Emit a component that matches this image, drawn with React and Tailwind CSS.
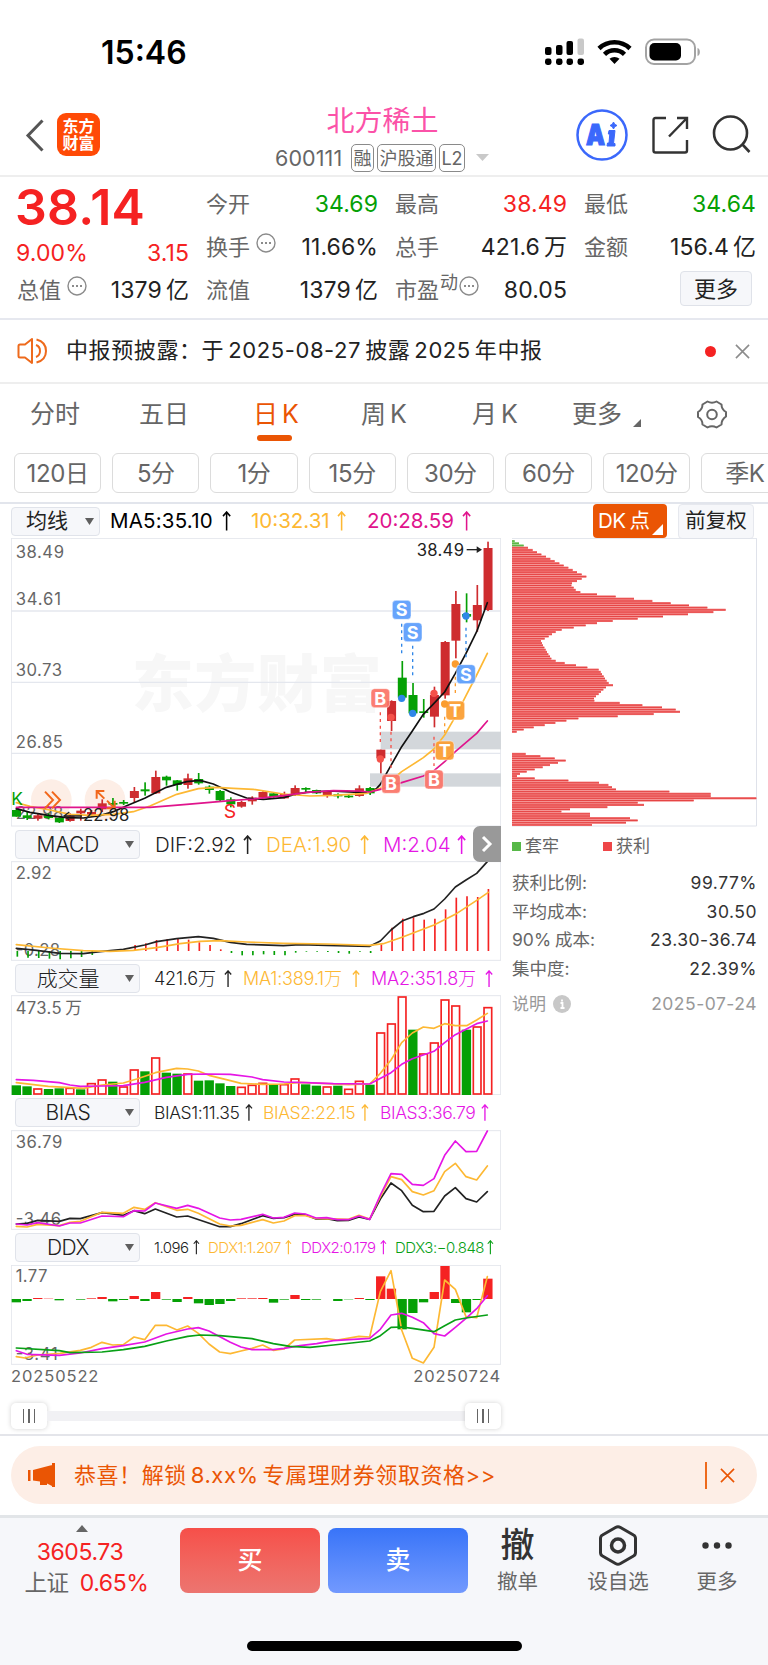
import React from 'react';
import clsx from 'clsx';

const RED = '#ce2c2f';
const GREEN = '#05a005';
const STEP = 32.15;

// [up, body top, body bottom, wick top, wick bottom]
const candles = [
  [0, 840, 860, 836, 860], [0, 856, 864, 846, 870], [1, 856, 866, 850, 872], [0, 856, 864, 850, 868],
  [0, 864, 877, 862, 879], [1, 857, 873, 850, 875], [1, 842, 850, 836, 872], [1, 846, 854, 840, 860],
  [1, 820, 838, 808, 846], [0, 819, 824, 804, 836], [0, 816, 821, 810, 825], [1, 783, 804, 771, 817],
  [0, 778, 784, 757, 797], [1, 741, 790, 722, 792], [0, 740, 751, 737, 767], [0, 751, 765, 750, 782],
  [1, 745, 765, 731, 776], [0, 747, 760, 729, 764], [0, 770, 780, 766, 791], [0, 783, 811, 780, 815],
  [0, 808, 823, 802, 832], [1, 816, 830, 812, 833], [1, 803, 814, 799, 824], [1, 786, 803, 784, 805],
  [0, 790, 801, 788, 803], [1, 792, 805, 785, 806], [1, 774, 794, 766, 798], [0, 774, 779, 772, 787],
  [0, 780, 790, 779, 792], [1, 786, 798, 783, 803], [0, 793, 799, 790, 805], [0, 797, 802, 793, 804],
  [1, 775, 798, 766, 800], [0, 774, 790, 771, 795], [1, 659, 685, 659, 730], [1, 513, 573, 511, 603],
  [0, 443, 503, 393, 506], [0, 495, 550, 459, 553], [0, 544, 549, 507, 563], [1, 495, 560, 470, 592],
  [1, 336, 496, 333, 506], [1, 222, 332, 183, 385], [0, 252, 260, 190, 277], [1, 225, 271, 165, 305],
  [1, 54, 240, 35, 243],
];

const macdBars = [
  395, 398, 399, 401, 403, 400, 396, 390, 378, 378, 378, 360, 355, 345, 342, 342, 344, 352, 360, 373,
  384, 391, 391, 388, 390, 391, 383, 380, 380, 381, 384, 386, 380, 384, 358, 308, 281, 277, 284, 281,
  253, 218, 214, 216, 192,
];

// negative value = down day
const volumes = [
  -376, -379, 386, -387, -385, 384, -388, 370, 359, -365, 380, 329, -334, 293, -338, -341, 341, -362,
  -361, -370, -378, 381, 375, 369, -373, 373, 356, -373, -377, 380, -377, 387, 363, -374, 218, 191, 110,
  -209, 281, 248, 119, 137, -209, 200, 142,
];

const ddxBars = [
  217, 213, 204, 206, 211, 207, 209, 205, 201, 214, 210, 198, 213, 186, 209, 216, 201, 220, 225, 222,
  213, 205, 205, 204, 218, 209, 195, 210, 209, 207, 213, 208, 204, 210, 139, 176, 298, 249, 217, 186,
  108, 219, 247, 210, 146,
];

const chips = [
  8, 21, 35, 48, 62, 75, 88, 102, 115, 128, 142, 155, 169, 182, 195, 209, 223, 209, 195, 180, 178, 185,
  191, 205, 255, 311, 366, 421, 476, 531, 586, 641, 604, 528, 453, 377, 302, 255, 221, 185, 149, 131,
  120, 110, 98, 87, 90, 93, 97, 101, 105, 109, 114, 118, 131, 158, 192, 226, 260, 266, 270, 275, 279,
  284, 290, 303, 282, 274, 267, 260, 252, 246, 247, 323, 391, 450, 491, 504, 425, 317, 199, 163, 130,
  98, 65, 35, 14, 0, 0, 0, 0, 0, 0, 0, 0, 0, 41, 85, 128, 161, 138, 114, 92, 68, 44, 24, 15, 68, 169,
  261, 289, 300, 312, 472, 596, 596, 733, 545, 377, 396, 286, 174, 148, 234, 234, 354, 377, 342, 240,
];

// x, y of the badge, y of the dot, dotted line from/to
const signals = [
  { t: 'B', x: 1141, y: 504, dot: 687, from: 547, to: 645 },
  { t: 'S', x: 1205, y: 239, dot: 505, from: 281, to: 380 },
  { t: 'S', x: 1238, y: 306, dot: 550, from: 347, to: 445 },
  { t: 'B', x: 1173, y: 761, dot: 562, from: 605, to: 720 },
  { t: 'B', x: 1302, y: 748, dot: 490, from: 620, to: 708 },
  { t: 'T', x: 1366, y: 541, dot: 402, from: 440, to: 500 },
  { t: 'T', x: 1334, y: 661, dot: 522, from: 560, to: 620 },
  { t: 'S', x: 1398, y: 432, dot: 258, from: 293, to: 390 },
];

const signalColor = {
  B: { box: '#fb7467', line: '#f5524a' },
  S: { box: '#5b9dfc', line: '#2f86e8' },
  T: { box: '#fb9d30', line: '#fb9d30' },
};

const Line = ({ points, color, w = 5 }) => (
  <polyline points={points} fill="none" stroke={color} strokeWidth={w} strokeLinejoin="round" strokeLinecap="round" />
);

const Label = ({ x, y, len, children, color = '#666', size = 50 }) => (
  <text x={x} y={y} fontSize={size} textLength={len} fill={color}>
    {children}
  </text>
);

// small breathing space between digits and Chinese characters
const Gap = () => <i className="inline-block w-[4px]" />;

const Dots = ({ className }) => (
  <svg className={className} width="20" height="20" viewBox="0 0 20 20" fill="none" stroke="#8b8b8b">
    <circle cx="10" cy="10" r="9" strokeWidth="1.4" />
    <path d="M5 10h2M9 10h2M13 10h2" strokeWidth="2" />
  </svg>
);

const StatusBar = () => (
  <div className="flex h-[100px] items-start pt-[38px] pl-[101px]">
    <div className="w-[91px] text-[32px] leading-[29px] font-semibold tracking-[0px] text-black">15:46</div>
    <svg className="ml-[351px]" width="160" height="30" viewBox="543 38 160 30">
      <g fill="#000">
        <rect x="545" y="47" width="6.5" height="8" rx="2" />
        <rect x="556" y="45" width="6.5" height="10" rx="2" />
        <rect x="566.5" y="41" width="6.5" height="14" rx="2" />
        <rect x="577.5" y="38.5" width="6.5" height="16.5" rx="2" fill="#c9c9c9" />
        <rect x="545" y="58.5" width="6.5" height="6.5" rx="2.4" />
        <rect x="556" y="58.5" width="6.5" height="6.5" rx="2.4" />
        <rect x="566.5" y="58.5" width="6.5" height="6.5" rx="2.4" />
        <rect x="577.5" y="58.5" width="6.5" height="6.5" rx="2.4" />
        <path d="M614.5 64l-5-5.200a7.600 7.600 0 0 1 10 0z" />
      </g>
      <g fill="none" stroke="#000" strokeWidth="4.600">
        <path d="M599 48.500a22.500 22.500 0 0 1 31 0" />
        <path d="M604.500 54.300a14.500 14.500 0 0 1 20 0" />
      </g>
      <rect x="646" y="39.500" width="49" height="24.500" rx="8" fill="none" stroke="#a3a3a3" strokeWidth="2" />
      <rect x="649.500" y="43" width="31.500" height="17.500" rx="5" fill="#000" />
      <path d="M697.500 48c3.200.6 3.200 7.400 0 8z" fill="#a3a3a3" />
    </svg>
  </div>
);

const Tag = ({ children, className }) => (
  <span className={clsx('flex h-7 items-center justify-center rounded-[5px] border-[1.5px] border-[#8a8a8a] text-[18px]', className)}>
    {children}
  </span>
);

const Header = () => (
  <header className="flex h-[77px] border-b-2 border-[#eeeeee]">
    <div className="flex w-[275px] items-start pl-[25px]">
      <svg className="mt-[19px]" width="20" height="33" viewBox="0 0 20 33" fill="none" stroke="#555" strokeWidth="3">
        <path d="M17.500 1.500 3 16.500l14.500 15" />
      </svg>
      <div className="mt-[13px] ml-3 h-[43px] w-[43px] rounded-[9px] bg-[#ff4a06] pt-[5px] text-center text-[16px] leading-[17px] font-bold text-white">
        东方<br />财富
      </div>
    </div>
    <div className="w-[215px]">
      <h1 className="pt-[3px] text-center text-[28px] leading-[36px] text-[#fb52a8]">北方稀土</h1>
      <div className="mt-[5px] flex items-center text-[#666]">
        <span className="w-[76px] text-[21.500px] leading-7 tracking-[0.1px]">600111</span>
        <Tag className="w-[23px]">融</Tag>
        <Tag className="ml-[3px] w-[59px]">沪股通</Tag>
        <Tag className="ml-[3px] w-[26px]">L2</Tag>
        <svg className="mt-[-2px] ml-[11px]" width="13" height="7" fill="#c9c9c9">
          <path d="M0 0h13L6.500 7z" />
        </svg>
      </div>
    </div>
    <div className="ml-[86px] flex pt-[9px]">
      <svg width="52" height="52" viewBox="0 0 52 52">
        <circle cx="26" cy="26" r="24.500" fill="none" stroke="#3b68fb" strokeWidth="2.500" />
        <text x="10" y="36" fontSize="28" fontWeight="900" fill="#3b68fb" stroke="#3b68fb" strokeWidth="1.200" textLength="19" lengthAdjust="spacingAndGlyphs">A</text>
        <path d="M33 21.500h6l-1.500 13h1.500v2.500h-8l.5-3h1.500l.8-9h-1.500zM37.500 13l1.200 2.300 2.300 1.200-2.300 1.200-1.200 2.300-1.200-2.300-2.300-1.200 2.300-1.200z" fill="#3b68fb" stroke="#3b68fb" />
      </svg>
      <svg className="mt-[6px] ml-[23px]" width="38" height="40" viewBox="0 0 38 40" fill="none" stroke="#333" strokeWidth="2.400">
        <path d="M15 3H4.500Q2.500 3 2.500 5V35.500Q2.500 37.500 4.500 37.500H34Q36 37.500 36 35.500V25" />
        <path d="M26 3H36V14M35.500 3.500 18 21.500" />
      </svg>
      <svg className="mt-[6px] ml-[22px]" width="42" height="42" viewBox="0 0 42 42" fill="none" stroke="#333" strokeWidth="2.600">
        <circle cx="19.500" cy="18" r="16.500" />
        <path d="M31 29 38.500 37" />
      </svg>
    </div>
  </header>
);

const Stat = ({ label, value, unit, color = 'text-[#222]', icon }) => (
  <div className="flex h-[43px] items-center justify-between">
    <span className="flex items-center text-[22px] tracking-normal text-[#666]">
      {label}
      {icon}
    </span>
    <span className={color}>
      {value}
      {unit && <Gap />}
      {unit}
    </span>
  </div>
);

const Quote = () => (
  <section className="grid h-[143px] grid-cols-[172px_172px_172px_172px] gap-x-[17px] border-b-2 border-[#e6e8ef] pt-[5px] pl-[17px] text-[23px] leading-[26px] tracking-[0.1px]">
    <div>
      <div className="ml-[-2px] h-[53px] pt-[1px] text-[50px] leading-[48px] font-semibold tracking-[0.3px] text-[#f52222]">38.14</div>
      <div className="ml-[-1px] flex h-[33px] items-center justify-between pt-[2px] text-[#f52222]">
        <span>9.00%</span>
        <span>3.15</span>
      </div>
      <Stat label="总值" value="1379" unit="亿" icon={<Dots className="mt-[-8px] ml-[6px]" />} />
    </div>
    <div>
      <Stat label="今开" value="34.69" color="text-[#05a005]" />
      <Stat label="换手" value="11.66%" icon={<Dots className="mt-[-8px] ml-[6px]" />} />
      <Stat label="流值" value="1379" unit="亿" />
    </div>
    <div>
      <Stat label="最高" value="38.49" color="text-[#f52222]" />
      <Stat label="总手" value="421.6" unit="万" />
      <Stat
        label="市盈"
        value="80.05"
        icon={
          <>
            <span className="mt-[-13px] ml-[1px] text-[18px]">动</span>
            <Dots className="mt-[-8px] ml-[1px]" />
          </>
        }
      />
    </div>
    <div>
      <Stat label="最低" value="34.64" color="text-[#05a005]" />
      <Stat label="金额" value="156.4" unit="亿" />
      <button className="mt-[3px] ml-24 block h-[35px] w-[72px] rounded-[4px] border-[1.5px] border-[#dfe2e9] bg-[#f6f7fa] text-[22px] leading-[30px] tracking-normal text-[#222]">更多</button>
    </div>
  </section>
);

const Cross = ({ className, size, color }) => (
  <svg className={className} width={size} height={size} viewBox="0 0 16 16" fill="none" stroke={color} strokeWidth="1.700">
    <path d="M1 1l14 14M15 1 1 15" />
  </svg>
);

const Notice = () => (
  <section className="flex h-[64px] items-center border-b-2 border-[#eeeeee] pl-[17px]">
    <svg width="32" height="28" viewBox="0 0 32 28" fill="none" stroke="#ee6a1c" strokeWidth="2">
      <path d="M15 2 8 7.500H3Q1.500 7.500 1.500 9V19Q1.500 20.500 3 20.500H8L15 26z" strokeLinejoin="round" />
      <path d="M19 8q4 1.500 4 6t-4 6M19.500 2.500q9.500 2.500 9.500 11.500t-9.500 11.500" />
    </svg>
    <p className="mt-[-2px] ml-[17px] w-[637px] text-[22px] tracking-[0.6px] text-[#222]">
      中报预披露：于
      <Gap />
      2025-08-27
      <Gap />
      披露
      <Gap />
      2025
      <Gap />
      年中报
    </p>
    <span className="ml-[2px] h-[11px] w-[11px] rounded-full bg-[#f52222]" />
    <Cross className="ml-[19px]" size={15} color="#8c8c8c" />
  </section>
);

const Tabs = () => (
  <nav className="flex h-[60px] pt-[12px] text-[25px] leading-[36px] whitespace-nowrap text-[#666]">
    <span className="ml-[30px] w-[109px]">分时</span>
    <span className="w-[114px]">五日</span>
    <span className="w-[108px] text-[#ea5504]">
      日<Gap />K
      <i className="mt-[3px] ml-1 block h-[6px] w-[35px] rounded-[3px] bg-[#ea5504]" />
    </span>
    <span className="w-[111px]">周<Gap />K</span>
    <span className="w-[100px]">月<Gap />K</span>
    <span>更多</span>
    <svg className="mt-[23px] ml-[11px]" width="8" height="8" fill="#666">
      <path d="M8 0v8H0z" />
    </svg>
    <svg className="mt-[4px] ml-[56px]" width="30" height="29" viewBox="0 0 30 29" fill="none" stroke="#666" strokeWidth="2" strokeLinejoin="round">
      <path d="M10.500 1.500Q15 4 19.500 1.500L24.500 4.500Q24.500 9.500 29 12V16.500Q24.500 19.500 24.500 24.500L19.500 27.500Q15 25 10.500 27.500L5.500 24.500Q5.500 19.500 1 17V12Q5.500 9.500 5.500 4.500z" />
      <circle cx="15" cy="14.500" r="4.800" />
    </svg>
  </nav>
);

const periods = ['120日', '5分', '1分', '15分', '30分', '60分', '120分', '季K'];

const Periods = () => (
  <div className="flex h-[60px] gap-[11px] overflow-hidden border-b-2 border-[#e2e5ec] pt-[9px] pl-[14px]">
    {periods.map((p) => (
      <button key={p} className="h-[40px] w-[87.2px] shrink-0 rounded-[6px] border-[1.5px] border-[#dcdcdc] text-[24px] leading-[37px] tracking-[-0.4px] text-[#666]">
        {p}
      </button>
    ))}
  </div>
);

const Select = ({ children, className, textClass }) => (
  <button className={clsx('flex h-[29px] shrink-0 items-center rounded-[4px] border-[1.5px] border-[#e0e3ea] bg-[#f6f7fa] text-[#222]', className)}>
    <span className={clsx('grow', textClass)}>{children}</span>
    <svg width="9" height="7" fill="#5f5f5f">
      <path d="M0 0h9L4.500 7z" />
    </svg>
  </button>
);

// label on the left, trend arrow on the right edge
const Reading = ({ text, className }) => (
  <span className={clsx('flex shrink-0 items-center justify-between whitespace-nowrap', className)}>
    {text}
    <svg className="h-[0.95em] w-[0.45em]" viewBox="0 0 9 19" fill="none" stroke="currentColor" strokeWidth="1.500">
      <path d="M4.500 19V1M1 5l3.500-4L8 5" />
    </svg>
  </span>
);

const MaBar = () => (
  <div className="flex h-[34px] items-center pl-[11px] text-[20.500px] leading-[26px]">
    <Select className="w-[89px] pr-[5px]" textClass="text-[21px] text-left pl-[14px]">均线</Select>
    <Reading text="MA5:35.10" className="ml-[10px] w-[121px] tracking-[0.2px] text-black" />
    <Reading text="10:32.31" className="ml-[20px] w-[95px] tracking-[0px] text-[#fdb833]" />
    <Reading text="20:28.59" className="ml-[21px] w-[104px] tracking-[0px] text-[#e0148c]" />
    <button className="relative ml-[122px] h-[34px] w-[74px] rounded-[4px] bg-[#ea5504] pl-[5px] text-left text-[20.500px] tracking-[-0.6px] text-white">
      DK<Gap />点
      <svg className="absolute right-[4px] bottom-[3px]" width="11" height="11" fill="#fff">
        <path d="M11 0v11H0z" />
      </svg>
    </button>
    <button className="ml-[11px] h-[35px] w-[76px] rounded-[4px] border-[1.5px] border-[#e6e8ee] bg-[#f6f7fa] text-[20.500px] text-[#222]">前复权</button>
  </div>
);

const Frame = ({ y, h }) => <rect x="34" y={y} width="1468" height={h} fill="none" stroke="#e4e6ec" strokeWidth="3" />;

const KChart = () => (
  <svg className="block" width="490" height="289" viewBox="33 24 1470 867">
    <text x="395" y="530" fontSize="186" fontWeight="900" fill="#f7f7f7" textLength="750">东方财富</text>
    {[243, 457, 670].map((y) => (
      <line key={y} x1="33" x2="1503" y1={y} y2={y} stroke="#e4e7ee" strokeWidth="4" />
    ))}
    <Frame y={25} h={863} />
    <rect x="1142" y="605" width="361" height="53" fill="#d3d7db" />
    <rect x="1110" y="730" width="393" height="40" fill="#d3d7db" />
    <circle cx="154" cy="809" r="61" fill="#fdeee6" />
    <circle cx="315" cy="809" r="61" fill="#fdeee6" />
    <Label x="47" y="84" len="145">38.49</Label>
    <Label x="47" y="225" len="136">34.61</Label>
    <Label x="47" y="439" len="139">30.73</Label>
    <Label x="47" y="655" len="142">26.85</Label>
    <Label x="47" y="868" len="143">22.98</Label>
    {candles.map(([up, top, bottom, high, low], i) => (
      <g key={i} fill={up ? RED : GREEN}>
        <rect x={47 + STEP * i} y={high} width="5" height={low - high} />
        <rect x={36 + STEP * i} y={top} width="27" height={bottom - top} />
      </g>
    ))}
    <Line color="#111" points="49,836 90,847 150,857 200,863 250,864 300,857 340,845 380,827 434,805 499,772 530,763 560,755 600,751 640,762 691,786 740,804 790,808 850,803 884,793 920,787 990,783 1077,787 1115,785 1130,775 1141,763 1173,706 1205,650 1237,603 1270,553 1302,520 1334,486 1366,430 1398,370 1430,305 1462,218" />
    <Line color="#fdb833" points="49,818 90,829 150,840 210,853 270,856 340,853 400,845 450,828 530,793 595,776 650,772 700,775 760,778 850,792 930,798 1000,796 1100,790 1141,775 1173,752 1205,725 1270,683 1302,657 1334,615 1366,560 1398,497 1430,435 1462,370" />
    <Line color="#e0148c" points="49,832 450,832 560,823 691,812 760,807 850,797 920,787 1000,782 1077,783 1110,786 1141,778 1173,768 1205,758 1270,738 1302,722 1334,695 1366,665 1430,610 1462,573" />
    {signals.map((s, i) => (
      <g key={i}>
        <circle cx={s.x} cy={s.dot} r="11" fill={signalColor[s.t].line} />
        <line x1={s.x} x2={s.x} y1={s.from} y2={s.to} stroke={signalColor[s.t].line} strokeWidth="4" strokeDasharray="9 11" />
        <rect x={s.x - 28} y={s.y - 28} width="56" height="57" rx="11" fill={signalColor[s.t].box} fillOpacity="0.93" stroke="#fff" strokeOpacity="0.7" strokeWidth="2" />
        <text x={s.x} y={s.y + 20} fontSize="54" fontWeight="700" fill="#fff" textAnchor="middle">{s.t}</text>
      </g>
    ))}
    <Label x="1250" y="77" len="142" color="#222">38.49</Label>
    <path d="M1400 59h40" stroke="#222" strokeWidth="4" />
    <path d="M1430 49l16 10-16 10z" fill="#222" />
    <g fill="none" stroke="#f2671b" strokeWidth="6">
      <path d="M135 785l24 25-24 25M156 785l24 25-24 25" />
      <path d="M290 806v-23h23M291 784l22 22M344 812v23h-23M343 834l-22-22" />
    </g>
    <path d="M246 858h-50M208 846l-16 12 16 12" stroke="#222" strokeWidth="4" fill="none" />
    <Label x="249" y="874" len="139" color="#222">22.98</Label>
    <Label x="34" y="825" color={GREEN} size={52}>K</Label>
    <Label x="671" y="865" color="#f52222" size={58}>S</Label>
  </svg>
);

const MacdChart = () => (
  <svg className="block" width="490" height="100" viewBox="33 108 1470 300">
    <Frame y={110} h={296} />
    <Label x="47" y="162" len="108">2.92</Label>
    <Label x="47" y="394" len="133">-0.28</Label>
    {macdBars.map((v, i) => (
      <line key={i} x1={52 + 32.12 * i} x2={52 + 32.12 * i} y1="378" y2={v} stroke={v > 378 ? GREEN : '#f52222'} strokeWidth="5" />
    ))}
    <Line color="#222" points="49,370 110,376 180,385 250,386 300,380 370,373 434,360 470,350 530,341 595,335 640,340 691,352 740,358 850,362 900,359 980,361 1109,364 1141,348 1173,315 1208,287 1240,275 1272,265 1302,252 1334,222 1366,186 1398,165 1430,145 1462,110" />
    <Line color="#fdb833" points="49,359 150,369 250,377 330,379 400,376 470,368 540,356 600,349 660,347 740,351 850,355 980,357 1109,361 1150,356 1208,336 1302,300 1366,268 1430,226 1465,202" />
  </svg>
);

const VolumeChart = () => (
  <svg className="block" width="490" height="100" viewBox="33 105 1470 300">
    <Frame y={107} h={297} />
    <Label x="47" y="161" len="138">473.5</Label>
    <Label x="196" y="161">万</Label>
    {volumes.map((v, i) =>
      v < 0 ? (
        <rect key={i} x={35 + STEP * i} y={-v} width="28" height={405 + v} fill={GREEN} />
      ) : (
        <rect key={i} x={37.5 + STEP * i} y={v + 1} width="23" height={401 - v} fill="#fff" stroke="#f52222" strokeWidth="5" />
      )
    )}
    <Line color="#fdb833" points="49,368 145,379 250,385 306,375 370,369 410,357 466,338 530,325 563,327 595,333 627,346 691,362 723,370 788,373 852,372 900,367 1045,374 1109,372 1141,340 1173,300 1205,248 1237,219 1270,201 1302,205 1334,191 1366,197 1400,197 1430,180 1462,160" />
    <Line color="#e516e5" points="49,359 100,361 178,368 210,375 241,379 306,378 370,377 434,367 499,352 563,343 620,342 691,343 756,351 788,359 852,366 916,368 1000,371 1109,372 1173,338 1205,313 1237,296 1302,274 1334,248 1366,224 1430,191 1462,183" />
  </svg>
);

const BiasChart = () => (
  <svg className="block" width="490" height="100" viewBox="33 105 1470 300">
    <Frame y={107} h={296} />
    <Label x="47" y="159" len="140">36.79</Label>
    <Label x="47" y="391" len="136">-3.46</Label>
    <Line color="#222" points="49,387 81,385 113,376 178,379 210,370 241,371 306,353 338,357 370,361 402,347 434,356 466,342 530,366 563,363 659,395 691,395 723,386 788,362 820,370 852,368 884,358 916,359 948,372 980,371 1012,377 1045,376 1077,366 1109,373 1141,312 1173,264 1205,287 1237,331 1270,350 1302,349 1334,303 1366,278 1398,311 1430,321 1462,290" />
    <Line color="#fdb833" points="49,394 81,396 113,388 178,392 210,382 241,379 306,352 370,355 402,337 434,343 466,323 530,346 563,343 595,355 659,387 691,393 723,391 788,374 820,384 852,378 884,362 916,362 948,370 1045,373 1077,361 1109,372 1141,305 1173,245 1205,254 1237,290 1270,300 1302,287 1334,230 1366,205 1398,245 1430,255 1462,213" />
    <Line color="#e516e5" points="49,387 81,390 113,383 178,393 210,384 241,384 306,363 370,365 402,347 434,348 466,324 530,340 563,331 595,340 659,369 691,375 723,373 788,358 820,369 852,367 884,354 916,357 948,369 980,368 1012,374 1045,374 1077,363 1109,373 1141,300 1173,236 1205,238 1237,268 1270,271 1302,251 1334,181 1366,138 1398,170 1430,169 1462,108" />
  </svg>
);

const DdxChart = () => (
  <svg className="block" width="490" height="100" viewBox="33 105 1470 300">
    <Frame y={106} h={297} />
    <Label x="47" y="157" len="95">1.77</Label>
    <Label x="47" y="389" len="126">-3.41</Label>
    {ddxBars.map((v, i) => (
      <rect key={i} x={35 + STEP * i} y={Math.min(v, 207)} width="28" height={Math.abs(v - 207)} fill={v > 207 ? GREEN : '#f52222'} />
    ))}
    <Line color="#fdb833" points="49,380 75,384 113,375 180,370 241,361 274,352 306,337 338,345 370,344 402,321 434,329 466,286 499,286 531,300 563,288 595,310 627,342 659,366 691,371 723,363 756,355 788,345 820,361 852,357 884,330 980,326 1012,330 1077,319 1109,321 1141,185 1173,122 1205,300 1237,385 1270,399 1302,352 1334,150 1366,178 1398,260 1430,263 1462,140" />
    <Line color="#e516e5" points="49,362 81,373 178,376 241,369 306,356 370,347 434,336 499,312 563,297 595,293 627,303 691,337 723,351 756,359 820,359 852,355 900,347 950,341 1000,332 1109,325 1141,298 1173,255 1205,250 1237,262 1270,278 1302,311 1334,318 1366,292 1398,265 1430,236 1462,197" />
    <Line color="#08a016" points="49,354 178,362 210,368 306,366 370,359 434,349 499,333 563,319 600,315 660,317 756,326 820,341 870,349 930,352 1000,345 1109,333 1141,317 1173,292 1205,291 1237,295 1302,305 1334,287 1366,270 1398,264 1462,255" />
  </svg>
);

const IndicatorBar = ({ name, className, children }) => (
  <div className={clsx('relative flex items-center pl-1 leading-[26px]', className)}>
    <Select className="w-[125px] pr-[5px]" textClass="text-[21px] text-center pr-[5px]">{name}</Select>
    {children}
  </div>
);

const Slider = () => (
  <div className="mt-[13px] flex h-[29px] items-center">
    {[0, 1].map((i) => (
      <React.Fragment key={i}>
        {i === 1 && <div className="h-[10px] grow bg-[#f1f1f4]" />}
        <div className="flex h-[26px] w-[36px] items-center justify-center gap-[4px] rounded-[5px] bg-white shadow-[0_0_5px_rgba(0,0,0,0.18)]">
          <i className="h-[14px] w-[1.5px] bg-[#666]" />
          <i className="h-[14px] w-[1.5px] bg-[#666]" />
          <i className="h-[14px] w-[1.5px] bg-[#666]" />
        </div>
      </React.Fragment>
    ))}
  </div>
);

const Indicators = () => (
  <div className="ml-[11px] w-[490px]">
    <KChart />
    <IndicatorBar name="MACD" className="h-[34px] pt-[1px] text-[20.500px] font-light">
      <Reading text="DIF:2.92" className="ml-[15px] w-[97px] text-[#222]" />
      <Reading text="DEA:1.90" className="ml-[14px] w-[103px] text-[#fdb833]" />
      <Reading text="M:2.04" className="ml-[14px] w-[83px] text-[#e516e5]" />
      <button className="absolute top-[-1px] right-0 flex h-[36px] w-[28px] items-center justify-center rounded-l-[7px] bg-[#999]">
        <svg width="12" height="18" viewBox="0 0 12 18" fill="none" stroke="#fff" strokeWidth="3">
          <path d="M2 2l7 7-7 7" />
        </svg>
      </button>
    </IndicatorBar>
    <MacdChart />
    <IndicatorBar name="成交量" className="h-[34px] pt-[1px] text-[18px] font-light tracking-[-0.2px]">
      <Reading text="421.6万" className="ml-[14px] w-[78px] text-[#222]" />
      <Reading text="MA1:389.1万" className="ml-[11px] w-[117px] text-[#fdb833]" />
      <Reading text="MA2:351.8万" className="ml-[11px] w-[122px] text-[#e516e5]" />
    </IndicatorBar>
    <VolumeChart />
    <IndicatorBar name="BIAS" className="h-[35px] text-[17.500px] font-light tracking-[-0.4px]">
      <Reading text="BIAS1:11.35" className="ml-[14px] w-[99px] text-[#222]" />
      <Reading text="BIAS2:22.15" className="ml-[10px] w-[106px] text-[#fdb833]" />
      <Reading text="BIAS3:36.79" className="ml-[11px] w-[109px] text-[#e516e5]" />
    </IndicatorBar>
    <BiasChart />
    <IndicatorBar name="DDX" className="h-[35px] text-[15px] font-light tracking-[-0.5px]">
      <Reading text="1.096" className="ml-[14px] w-[46px] text-[#222]" />
      <Reading text="DDX1:1.207" className="ml-[8px] w-[84px] text-[#fdb833]" />
      <Reading text="DDX2:0.179" className="ml-[9px] w-[86px] text-[#e516e5]" />
      <Reading text="DDX3:−0.848" className="ml-[8px] w-[99px] text-[#08a016]" />
    </IndicatorBar>
    <DdxChart />
    <div className="flex h-[23px] items-center justify-between text-[16.500px] tracking-[0.9px] text-[#666]">
      <span>20250522</span>
      <span>20250724</span>
    </div>
    <Slider />
  </div>
);

const costs = [
  [<>获利比例:</>, '99.77%'],
  [<>平均成本:</>, '30.50'],
  [<>90%<Gap />成本:</>, '23.30-36.74'],
  [<>集中度:</>, '22.39%'],
];

const ChipPanel = () => (
  <aside className="ml-[11px] w-[245px] text-[17.500px] text-[#666]">
    <svg className="block" width="245" height="289" viewBox="36 24 735 867">
      <path d="M0 25H769.500V888H0" fill="none" stroke="#dfe2ea" strokeWidth="3" />
      {chips.map((w, i) => (
        <g key={i}>
          <rect x="36" y={30 + i * 6.65} width={w} height="6.650" fill={i < 3 ? '#7cc766' : '#f27474'} />
          <rect x="36" y={32 + i * 6.65} width={w} height="3" fill={i < 3 ? '#58b545' : '#e54545'} />
        </g>
      ))}
    </svg>
    <div className="flex h-[39px] items-center">
      <i className="h-[9px] w-[9px] bg-[#57b848]" />
      <span className="ml-1 w-[78px] text-[17px]">套牢</span>
      <i className="h-[9px] w-[9px] bg-[#ee4648]" />
      <span className="ml-1 text-[17px]">获利</span>
    </div>
    <div className="pt-[3px]">
      {costs.map(([label, value]) => (
        <div key={value} className="flex h-[28.600px] items-center justify-between">
          <span>{label}</span>
          <span className="tracking-[0.5px] text-[#333]">{value}</span>
        </div>
      ))}
    </div>
    <div className="mt-[7px] flex h-[28px] items-center text-[#999]">
      <span className="text-[17px]">说明</span>
      <svg className="ml-[7px]" width="18" height="18" viewBox="0 0 18 18">
        <circle cx="9" cy="9" r="9" fill="#c8c8c8" />
        <path d="M7.500 8H9.500V13M7.500 13H11.500M9 4.500v2" stroke="#fff" strokeWidth="1.800" fill="none" />
      </svg>
      <span className="ml-auto tracking-[0.5px]">2025-07-24</span>
    </div>
  </aside>
);

const Banner = () => (
  <section className="h-[81px] border-t-2 border-[#e4e5ea] bg-white pt-[10px] pl-[11px]">
    <div className="flex h-[58px] w-[746px] items-center rounded-full bg-[#fdeee6] pl-[17px] text-[#ea5504]">
      <svg width="28" height="26" viewBox="0 0 28 26" fill="#ea5504">
        <path d="M0 8h2.500v11H0zM5 8 24 3V24L19 21.500V23H12V19.500L5 18.500zM24 1h3v24h-3z" />
      </svg>
      <p className="ml-[18px] w-[631px] text-[22px] tracking-[0.55px]">
        恭喜！解锁
        <Gap />
        8.xx%
        <Gap />
        专属理财券领取资格&gt;&gt;
      </p>
      <i className="h-[27px] w-[1.500px] bg-[#ee6a1c]" />
      <Cross className="ml-[13px]" size={15} color="#ea5504" />
    </div>
  </section>
);

const Footer = () => (
  <footer className="h-[150px] border-t-3 border-[#e2e5e8] bg-[#f6f7fa]">
    <div className="flex h-[123px]">
      <div className="w-[163px] pt-[7px] text-center text-[23px] leading-[26px] tracking-[-0.4px] text-[#f52222]">
        <svg className="mx-auto block" width="12" height="7" fill="#666">
          <path d="M0 7h12L6 0z" />
        </svg>
        <div className="mt-[7px] pr-[3px]">3605.73</div>
        <div className="mt-[5px] pl-[10px] whitespace-nowrap">
          <span className="mr-[11px] text-[22.500px] text-[#666]">上证</span>0.65%
        </div>
      </div>
      <button className="mt-[10px] ml-[17px] h-[65px] w-[140px] rounded-[8px] bg-linear-to-b from-[#f64f49] to-[#ec7570] text-[25px] font-medium text-white">买</button>
      <button className="mt-[10px] ml-2 h-[65px] w-[140px] rounded-[8px] bg-linear-to-b from-[#3874f8] to-[#7299fe] text-[25px] font-medium text-white">卖</button>
      <div className="ml-[19px] w-[61px] pt-[7px] text-center text-[#666]">
        <div className="text-[34px] leading-[40px] font-medium text-[#333]">撤</div>
        <div className="mt-[4px] text-[20.500px] leading-[26px]">撤单</div>
      </div>
      <div className="ml-[39px] w-[62px] pt-[7px] text-center text-[#666]">
        <svg className="mx-auto block" width="40" height="41" viewBox="0 0 40 41" fill="none" stroke="#333" strokeWidth="3" strokeLinejoin="round">
          <path d="M17.500 2.500q2.500-1.500 5 0L35.500 10q2 1 2 3.500V27.500q0 2.500-2 3.500L22.500 38.500q-2.500 1.500-5 0L4.500 31q-2-1-2-3.500V13.500Q2.500 11 4.500 10z" />
          <circle cx="20" cy="20.500" r="6.500" strokeWidth="3.500" />
        </svg>
        <div className="mt-[3px] text-[20.500px] leading-[26px]">设自选</div>
      </div>
      <div className="ml-[47px] w-[42px] pt-[7px] text-center text-[#666]">
        <svg className="mx-auto block" width="30" height="41" fill="#333">
          <circle cx="3.500" cy="20.500" r="3.200" />
          <circle cx="15" cy="20.500" r="3.200" />
          <circle cx="26.500" cy="20.500" r="3.200" />
        </svg>
        <div className="mt-[3px] text-[20.500px] leading-[26px]">更多</div>
      </div>
    </div>
    <div className="mx-auto h-[10px] w-[275px] rounded-full bg-black" />
  </footer>
);

export default function App() {
  return (
    <div className="h-[1665px] w-[768px] overflow-hidden bg-white font-['Inter','Noto_Sans_CJK_SC',sans-serif]">
      <StatusBar />
      <Header />
      <Quote />
      <Notice />
      <Tabs />
      <Periods />
      <MaBar />
      <main className="flex h-[896px]">
        <Indicators />
        <ChipPanel />
      </main>
      <Banner />
      <Footer />
    </div>
  );
}
